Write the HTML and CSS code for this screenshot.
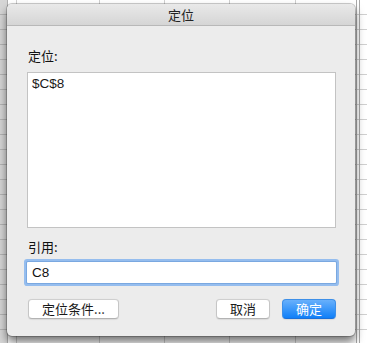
FILE: index.html
```html
<!DOCTYPE html>
<html lang="zh">
<head>
<meta charset="utf-8">
<link rel="stylesheet" href="styles.css">
</head>
<body>
<div class="sheet">
  <div class="rowhdr"></div>
  <div class="grid"></div>
</div>
<div class="dialog">
  <div class="titlebar">定位</div>
  <div class="content">
    <div class="lbl">定位:</div>
    <div class="listbox">$C$8</div>
    <div class="lbl lbl2">引用:</div>
    <div class="field">C8</div>
    <div class="buttons">
      <button class="btn btn-wide">定位条件...</button>
      <span class="spacer"></span>
      <button class="btn">取消</button>
      <button class="btn primary">确定</button>
    </div>
  </div>
</div>
</body>
</html>
```

FILE: styles.css
```css
html, body {
  margin: 0;
  padding: 0;
}
body {
  width: 367px;
  height: 343px;
  overflow: hidden;
  position: relative;
  font-family: "Liberation Sans", "Noto Sans CJK SC", sans-serif;
  font-size: 13px;
  color: #1e1e1e;
}
.sheet {
  display: flex;
  width: 367px;
  height: 343px;
}
.rowhdr {
  width: 7px;
  background-color: #d6d6d6;
  background-image: repeating-linear-gradient(to bottom, transparent 0, transparent 14px, #b4b4b4 14px, #b4b4b4 15px);
  border-right: 1px solid #b0b0b0;
}
.grid {
  flex: 1;
  background-color: #ffffff;
  background-image:
    linear-gradient(#d0d0d0, #d0d0d0),
    linear-gradient(#d0d0d0, #d0d0d0),
    linear-gradient(#d0d0d0, #d0d0d0),
    linear-gradient(#d0d0d0, #d0d0d0),
    linear-gradient(#d0d0d0, #d0d0d0),
    linear-gradient(#a8a8a8, #a8a8a8),
    linear-gradient(#a8a8a8, #a8a8a8),
    repeating-linear-gradient(to bottom, transparent 0, transparent 14px, #d0d0d0 14px, #d0d0d0 15px);
  background-size: 1px 100%, 1px 100%, 1px 100%, 1px 100%, 1px 100%, 1px 100%, 1px 100%, 100% 100%;
  background-position: 8px 0, 91px 0, 156px 0, 221px 0, 287px 0, 348px 0, 351px 0, 0 0;
  background-repeat: no-repeat;
}
.dialog {
  position: absolute;
  left: 7px;
  top: 4px;
  width: 348px;
  height: 332px;
  background: #ececec;
  border-radius: 5px;
  box-shadow: 0 0 0 1px rgba(0,0,0,0.2), 0 6px 10px rgba(0,0,0,0.55);
  display: flex;
  flex-direction: column;
  overflow: hidden;
}
.titlebar {
  height: 21px;
  line-height: 22px;
  text-align: center;
  background: linear-gradient(to bottom, #e9e9e9, #d5d5d5);
  border-bottom: 1px solid #b8b8b8;
  font-family: "Noto Sans CJK SC", sans-serif;
  font-size: 13px;
  color: #222;
}
.content {
  flex: 1;
  display: flex;
  flex-direction: column;
  padding: 22px 19px 20px 20px;
}
.lbl {
  font-family: "Noto Sans CJK SC", sans-serif;
  font-size: 13px;
  line-height: 16px;
  padding-left: 1px;
  margin-bottom: 8px;
  color: #111;
}
.lbl2 {
  margin-top: 11px;
  margin-bottom: 7px;
}
.listbox {
  height: 151px;
  background: #ffffff;
  border: 1px solid #c3c3c3;
  padding: 3px 4px 0;
  line-height: 16px;
  font-size: 13.5px;
  color: #1a1a1a;
}
.field {
  height: 21px;
  line-height: 21px;
  background: #ffffff;
  padding: 0 5px;
  font-size: 13.5px;
  color: #111;
  box-shadow: 0 0 0 1px #7aa8e0, 0 0 0 3px #95bdee;
  border-radius: 1px;
}
.buttons {
  display: flex;
  align-items: center;
  margin-top: 16px;
  gap: 12px;
  padding-left: 1px;
}
.spacer {
  flex: 1;
}
.btn {
  height: 20px;
  width: 54px;
  padding: 0;
  border: 1px solid #c6c6c6;
  border-top-color: #cfcfcf;
  border-bottom-color: #b3b3b3;
  border-radius: 4px;
  background: #ffffff;
  font-family: "Noto Sans CJK SC", sans-serif;
  font-size: 13px;
  line-height: 18px;
  color: #1a1a1a;
  box-shadow: 0 0.5px 1px rgba(0,0,0,0.08);
}
.btn-wide {
  width: 91px;
}
.primary {
  background: linear-gradient(to bottom, #68b0fb, #0f7ff8);
  border-color: #3d8fe8;
  border-bottom-color: #1a6fd8;
  color: #ffffff;
}
```
